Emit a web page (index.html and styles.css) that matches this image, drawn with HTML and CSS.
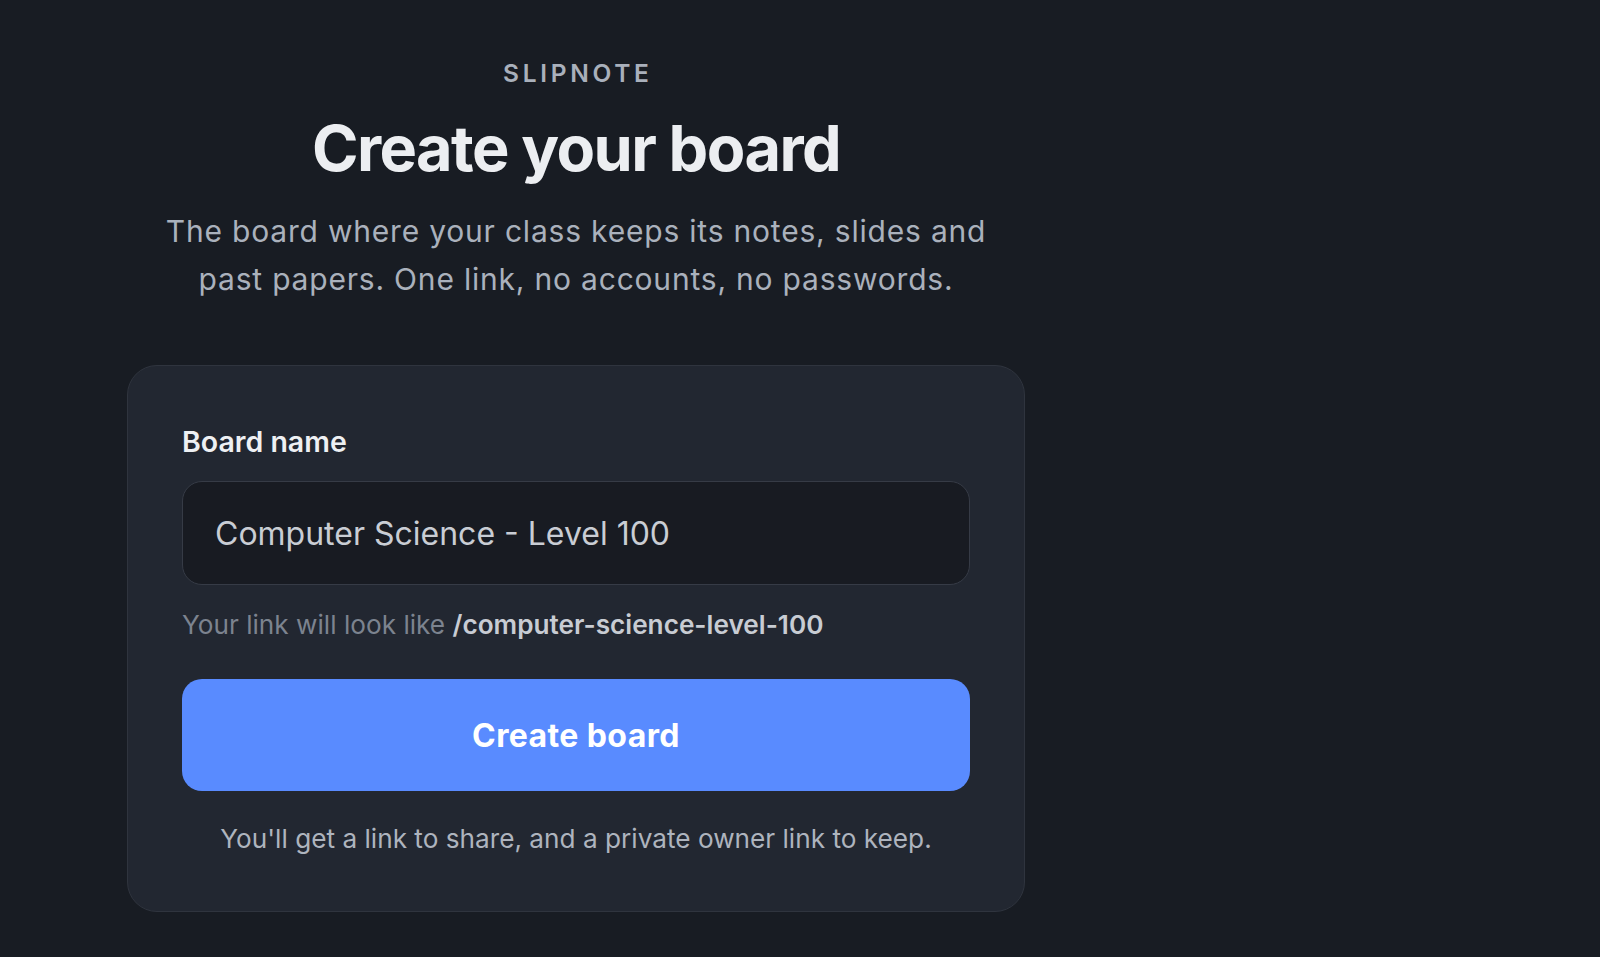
FILE: index.html
```html
<!DOCTYPE html>
<html lang="en">
<head>
    <meta charset="UTF-8">
    <meta name="viewport" content="width=device-width, initial-scale=1.0">
    <title>Slipnote - Create your board</title>
    <link rel="stylesheet" href="styles.css">
</head>
<body>
    <main class="page">
        <div class="header">
            <p class="brand">SLIPNOTE</p>
            <h1>Create your board</h1>
            <p class="lead">The board where your class keeps its notes, slides and past papers. One link, no accounts, no passwords.</p>
        </div>

        <form class="card" onsubmit="return false">
            <label class="field-label" for="board-name">Board name</label>
            <input id="board-name" class="field-input" type="text" value="Computer Science - Level 100">
            <p class="hint">Your link will look like <strong id="slug">/computer-science-level-100</strong></p>

            <button class="create-btn" type="submit">Create board</button>

            <p class="note">You'll get a link to share, and a private owner link to keep.</p>
        </form>
    </main>

    <script>
        const input = document.getElementById('board-name');
        const slug = document.getElementById('slug');

        input.addEventListener('input', () => {
            const s = input.value.toLowerCase().replace(/[^a-z0-9]+/g, '-').replace(/^-+|-+$/g, '');
            slug.textContent = '/' + s;
        });
    </script>
</body>
</html>
```

FILE: styles.css
```css
* {
    box-sizing: border-box;
}
body {
    margin: 0;
    min-height: 100vh;
    background-color: #181c23;
    color: #eef0f3;
    font-family: 'Inter', 'Noto Sans', sans-serif;
}
.page {
    width: 898px;
    margin-left: 127px;
    padding-top: 57px;
}
.header {
    text-align: center;
}
.brand {
    margin: 0;
    font-size: 24.5px;
    line-height: 33px;
    font-weight: 600;
    letter-spacing: 0.15em;
    text-indent: 0.15em;
    color: #a9b0bb;
}
h1 {
    margin: 25px 0 0;
    font-size: 63px;
    line-height: 66px;
    font-weight: 700;
    letter-spacing: -0.025em;
    color: #eceef1;
}
.lead {
    margin: 26px auto 0;
    max-width: 860px;
    font-size: 30px;
    line-height: 48px;
    letter-spacing: 0.8px;
    color: #aab1bc;
}
.card {
    display: flex;
    flex-direction: column;
    margin-top: 62px;
    padding: 56px 54px 53px;
    background-color: #222731;
    border: 1px solid #2f343e;
    border-radius: 30px;
}
.field-label {
    font-size: 28.5px;
    line-height: 39px;
    font-weight: 600;
    color: #eef0f3;
}
.field-input {
    margin-top: 20px;
    height: 104px;
    padding: 0 32px;
    background-color: #181b22;
    border: 1.5px solid #363b46;
    border-radius: 20px;
    font-family: inherit;
    font-size: 32px;
    color: #c9cdd4;
    outline: none;
}
.hint {
    margin: 20px 0 0;
    font-size: 26.2px;
    line-height: 40px;
    color: #7c838f;
}
.hint strong {
    font-weight: 600;
    color: #c8ccd3;
}
.create-btn {
    margin-top: 34px;
    height: 112px;
    background-color: #598bff;
    border: none;
    border-radius: 20px;
    font-family: inherit;
    font-size: 32px;
    font-weight: 700;
    letter-spacing: 0.4px;
    color: #ffffff;
    cursor: pointer;
}
.create-btn:hover {
    background-color: #4c80f5;
}
.note {
    margin: 28px 0 0;
    text-align: center;
    font-size: 26.2px;
    line-height: 39px;
    color: #aeb4be;
}
```
